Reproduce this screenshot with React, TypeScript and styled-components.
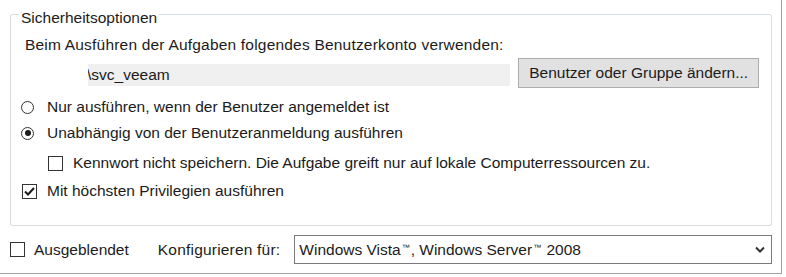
import styled, { createGlobalStyle } from "styled-components";

const GlobalStyle = createGlobalStyle`
  html, body {
    margin: 0;
    padding: 0;
    background: #ffffff;
  }
  body {
    font-family: "Liberation Sans", Arial, sans-serif;
    font-size: 15.5px;
    color: #1b1b1b;
  }
`;

const Frame = styled.div`
  box-sizing: border-box;
  width: 782px;
  height: 274px;
  border-right: 1px solid #a0a0a0;
  border-bottom: 1px solid #a0a0a0;
  padding: 14px 9px 0 10px;
  display: flex;
  flex-direction: column;
`;

const GroupBox = styled.section`
  position: relative;
  box-sizing: border-box;
  height: 212px;
  border: 1px solid #dcdcdc;
  border-top-color: #d5dde3;
  border-radius: 3px;
  padding: 21px 12px 0 14px;
  display: flex;
  flex-direction: column;
`;

const Legend = styled.span`
  position: absolute;
  top: -6px;
  left: 8px;
  padding: 0 2px;
  background: #ffffff;
  line-height: 18px;
`;

const Label = styled.div`
  line-height: 18px;
  letter-spacing: 0.2px;
  white-space: nowrap;
`;

const AccountRow = styled.div`
  display: flex;
  align-items: center;
  margin-top: 4px;
  padding-left: 63px;
  gap: 8px;
`;

const AccountField = styled.div`
  width: 423px;
  height: 22px;
  margin-top: 3px;
  background: #f0f0f0;
  line-height: 22px;
  text-indent: -1px;
  white-space: nowrap;
  overflow: hidden;
`;

const Button = styled.button`
  box-sizing: border-box;
  width: 241px;
  height: 30px;
  padding: 0;
  border: 1px solid #adadad;
  background: #e1e1e1;
  font: inherit;
  color: inherit;
`;

const OptionRow = styled.label<{ $top: number; $indent?: number; $gap?: number }>`
  display: flex;
  align-items: center;
  height: 18px;
  margin-top: ${(p) => p.$top}px;
  padding-left: ${(p) => p.$indent ?? 0}px;
  gap: ${(p) => p.$gap ?? 10}px;
  white-space: nowrap;
`;

const RadioCircle = styled.span<{ $checked?: boolean }>`
  box-sizing: border-box;
  width: 13px;
  height: 13px;
  margin-left: -4px;
  border: 1px solid #333333;
  border-radius: 50%;
  display: flex;
  align-items: center;
  justify-content: center;
  flex-shrink: 0;

  &::after {
    content: "";
    width: 6px;
    height: 6px;
    border-radius: 50%;
    background: ${(p) => (p.$checked ? "#1b1b1b" : "transparent")};
  }
`;

const Box = styled.span<{ $offset?: number }>`
  box-sizing: border-box;
  width: 15px;
  height: 15px;
  margin-left: ${(p) => p.$offset ?? 0}px;
  border: 1px solid #333333;
  background: #ffffff;
  display: flex;
  align-items: center;
  justify-content: center;
  flex-shrink: 0;
`;

const BottomRow = styled.div`
  display: flex;
  align-items: center;
  margin-top: 9px;
  height: 29px;
`;

const HiddenOption = styled.label`
  display: flex;
  align-items: center;
  gap: 9px;
  white-space: nowrap;
`;

const ConfigLabel = styled.span`
  margin-left: 29px;
  letter-spacing: 0.2px;
  white-space: nowrap;
`;

const Select = styled.div`
  box-sizing: border-box;
  margin-left: 14px;
  width: 481px;
  height: 29px;
  border: 1px solid #7a7a7a;
  display: flex;
  align-items: center;
  justify-content: space-between;
  padding: 0 6px 0 4px;
  white-space: nowrap;
`;

const Trademark = styled.span`
  font-size: 8px;
  vertical-align: 5px;
  margin: 0 1px;
`;

function CheckMark() {
  return (
    <svg width="11" height="9" viewBox="0 0 11 9">
      <polyline points="1,4.5 4,7.5 10,1" fill="none" stroke="#1b1b1b" strokeWidth="2" />
    </svg>
  );
}

function Checkbox({ checked, offset }: { checked?: boolean; offset?: number }) {
  return <Box $offset={offset}>{checked && <CheckMark />}</Box>;
}

function Chevron() {
  return (
    <svg width="10" height="7" viewBox="0 0 10 7">
      <polyline points="1,1.5 5,5.5 9,1.5" fill="none" stroke="#333333" strokeWidth="2" />
    </svg>
  );
}

export default function App() {
  return (
    <>
      <GlobalStyle />
      <Frame>
        <GroupBox>
          <Legend>Sicherheitsoptionen</Legend>
          <Label>Beim Ausführen der Aufgaben folgendes Benutzerkonto verwenden:</Label>
          <AccountRow>
            <AccountField>\svc_veeam</AccountField>
            <Button>Benutzer oder Gruppe ändern...</Button>
          </AccountRow>
          <OptionRow $top={10} $gap={13}>
            <RadioCircle />
            Nur ausführen, wenn der Benutzer angemeldet ist
          </OptionRow>
          <OptionRow $top={8} $gap={13}>
            <RadioCircle $checked />
            Unabhängig von der Benutzeranmeldung ausführen
          </OptionRow>
          <OptionRow $top={12} $indent={23}>
            <Checkbox />
            Kennwort nicht speichern. Die Aufgabe greift nur auf lokale Computerressourcen zu.
          </OptionRow>
          <OptionRow $top={10}>
            <Checkbox checked offset={-3} />
            Mit höchsten Privilegien ausführen
          </OptionRow>
        </GroupBox>
        <BottomRow>
          <HiddenOption>
            <Checkbox />
            Ausgeblendet
          </HiddenOption>
          <ConfigLabel>Konfigurieren für:</ConfigLabel>
          <Select>
            <span>
              Windows Vista<Trademark>™</Trademark>, Windows Server<Trademark>™</Trademark> 2008
            </span>
            <Chevron />
          </Select>
        </BottomRow>
      </Frame>
    </>
  );
}
